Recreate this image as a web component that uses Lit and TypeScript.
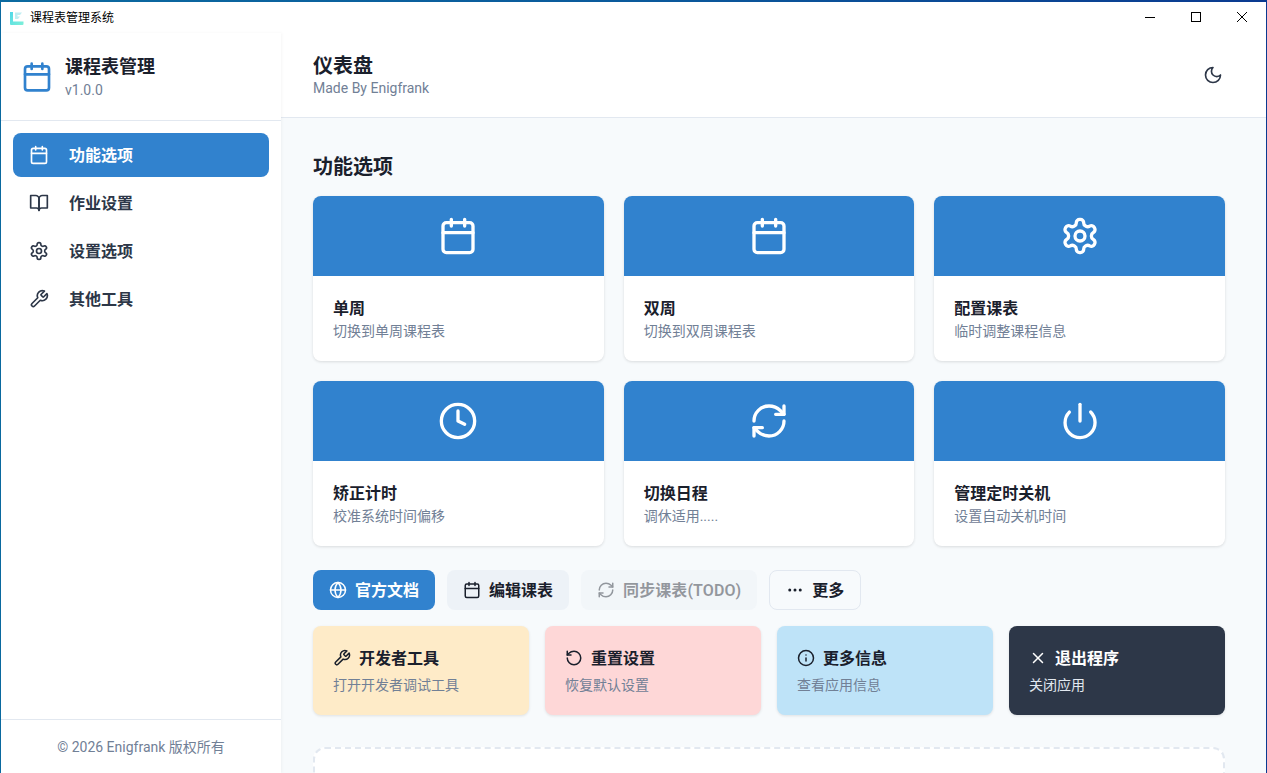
import { LitElement, html, css, svg } from "lit";
import { customElement } from "lit/decorators.js";

const ICONS: Record<string, unknown> = {
  calendar: svg`<rect x="3" y="4" width="18" height="18" rx="2"/><path d="M16 2v4M8 2v4M3 10h18"/>`,
  book: svg`<path d="M2 3h6a4 4 0 0 1 4 4v14a3 3 0 0 0-3-3H2z"/><path d="M22 3h-6a4 4 0 0 0-4 4v14a3 3 0 0 1 3-3h7z"/>`,
  gear: svg`<path d="M12.22 2h-.44a2 2 0 0 0-2 2v.18a2 2 0 0 1-1 1.73l-.43.25a2 2 0 0 1-2 0l-.15-.08a2 2 0 0 0-2.73.73l-.22.38a2 2 0 0 0 .73 2.73l.15.1a2 2 0 0 1 1 1.72v.51a2 2 0 0 1-1 1.74l-.15.09a2 2 0 0 0-.73 2.73l.22.38a2 2 0 0 0 2.73.73l.15-.08a2 2 0 0 1 2 0l.43.25a2 2 0 0 1 1 1.73V20a2 2 0 0 0 2 2h.44a2 2 0 0 0 2-2v-.18a2 2 0 0 1 1-1.73l.43-.25a2 2 0 0 1 2 0l.15.08a2 2 0 0 0 2.73-.73l.22-.39a2 2 0 0 0-.73-2.73l-.15-.08a2 2 0 0 1-1-1.74v-.5a2 2 0 0 1 1-1.74l.15-.09a2 2 0 0 0 .73-2.73l-.22-.38a2 2 0 0 0-2.73-.73l-.15.08a2 2 0 0 1-2 0l-.43-.25a2 2 0 0 1-1-1.73V4a2 2 0 0 0-2-2z"/><circle cx="12" cy="12" r="3"/>`,
  wrench: svg`<path d="M14.7 6.3a1 1 0 0 0 0 1.4l1.6 1.6a1 1 0 0 0 1.4 0l3.77-3.77a6 6 0 0 1-7.94 7.94l-6.91 6.91a2.12 2.12 0 0 1-3-3l6.91-6.91a6 6 0 0 1 7.94-7.94l-3.76 3.76z"/>`,
  moon: svg`<path d="M12 3a6 6 0 0 0 9 9 9 9 0 1 1-9-9Z"/>`,
  clock: svg`<circle cx="12" cy="12" r="10"/><path d="M12 6v6l4 2"/>`,
  refresh: svg`<path d="M3 12a9 9 0 0 1 9-9 9.75 9.75 0 0 1 6.74 2.74L21 8"/><path d="M21 3v5h-5"/><path d="M21 12a9 9 0 0 1-9 9 9.75 9.75 0 0 1-6.74-2.74L3 16"/><path d="M8 16H3v5"/>`,
  power: svg`<path d="M12 2v10"/><path d="M18.4 6.6a9 9 0 1 1-12.77.04"/>`,
  globe: svg`<circle cx="12" cy="12" r="10"/><path d="M12 2a14.5 14.5 0 0 0 0 20 14.5 14.5 0 0 0 0-20"/><path d="M2 12h20"/>`,
  more: svg`<circle cx="12" cy="12" r="1"/><circle cx="19" cy="12" r="1"/><circle cx="5" cy="12" r="1"/>`,
  undo: svg`<path d="M3 12a9 9 0 1 0 9-9 9.75 9.75 0 0 0-6.74 2.74L3 8"/><path d="M3 3v5h5"/>`,
  info: svg`<circle cx="12" cy="12" r="10"/><path d="M12 16v-4"/><path d="M12 8h.01"/>`,
  x: svg`<path d="M18 6 6 18"/><path d="m6 6 12 12"/>`,
};

const icon = (name: string, size: number) => html`<svg
  class="ic"
  width=${size}
  height=${size}
  viewBox="0 0 24 24"
  fill="none"
  stroke="currentColor"
  stroke-width="2"
  stroke-linecap="round"
  stroke-linejoin="round"
>${ICONS[name]}</svg>`;

const NAV = [
  ["calendar", "功能选项"],
  ["book", "作业设置"],
  ["gear", "设置选项"],
  ["wrench", "其他工具"],
];
const CARDS = [
  ["calendar", "单周", "切换到单周课程表"],
  ["calendar", "双周", "切换到双周课程表"],
  ["gear", "配置课表", "临时调整课程信息"],
  ["clock", "矫正计时", "校准系统时间偏移"],
  ["refresh", "切换日程", "调休适用....."],
  ["power", "管理定时关机", "设置自动关机时间"],
];
const BUTTONS = [
  ["globe", "官方文档", "primary"],
  ["calendar", "编辑课表", "secondary"],
  ["refresh", "同步课表(TODO)", "secondary disabled"],
  ["more", "更多", "outline"],
];
const TILES = [
  ["wrench", "开发者工具", "打开开发者调试工具", "amber"],
  ["undo", "重置设置", "恢复默认设置", "rose"],
  ["info", "更多信息", "查看应用信息", "sky"],
  ["x", "退出程序", "关闭应用", "dark"],
];

@customElement("app-root")
export class AppRoot extends LitElement {
  static styles = css`
    :host {
      display: block;
      width: 1267px;
      height: 773px;
      overflow: hidden;
      font-family: Roboto, "Noto Sans CJK SC", sans-serif;
      color: #1a202c;
    }
    * {
      box-sizing: border-box;
    }
    .ic {
      display: block;
      flex: none;
    }
    .win {
      height: 773px;
      padding: 2px 1px 0 1px;
      background: linear-gradient(90deg, #0b6aa0 0%, #0a5a9c 50%, #0a3a90 100%);
      display: flex;
      flex-direction: column;
    }
    .titlebar {
      height: 31px;
      flex: none;
      background: #fff;
      display: flex;
      align-items: center;
      padding-left: 9px;
      font-size: 12px;
      color: #000;
    }
    .logo {
      margin-right: 6px;
    }
    .tname {
      flex: 1;
      font-family: "Noto Sans CJK SC", sans-serif;
      position: relative;
      top: -1px;
    }
    .winbtns {
      display: flex;
      margin-right: 1px;
    }
    .winbtn {
      width: 46px;
      height: 31px;
      display: flex;
      align-items: center;
      justify-content: center;
      position: relative;
      top: -1px;
    }
    .body {
      flex: 1;
      display: flex;
      min-height: 0;
    }
    .side {
      width: 280px;
      flex: none;
      background: #fff;
      display: flex;
      flex-direction: column;
      box-shadow: 1px 0 3px rgba(0, 0, 0, 0.04);
      position: relative;
      z-index: 1;
    }
    .brand {
      height: 88px;
      flex: none;
      border-bottom: 1px solid #e2e8f0;
      display: flex;
      align-items: center;
      gap: 12px;
      padding: 0 20px;
      color: #3182ce;
    }
    .brand-t {
      font-size: 18px;
      font-weight: 700;
      line-height: 27px;
      color: #1a202c;
    }
    .brand-v {
      font-size: 14px;
      line-height: 20px;
      color: #718096;
    }
    .nav {
      flex: 1;
      padding: 12px;
      display: flex;
      flex-direction: column;
      gap: 4px;
    }
    .item {
      height: 44px;
      display: flex;
      align-items: center;
      gap: 20px;
      padding: 0 16px;
      border-radius: 8px;
      font-size: 16px;
      font-weight: 600;
      color: #2d3748;
    }
    .item span {
      padding-bottom: 2px;
    }
    .item.on {
      background: #3182ce;
      color: #fff;
    }
    .foot {
      height: 54px;
      flex: none;
      border-top: 1px solid #e2e8f0;
      display: flex;
      align-items: center;
      justify-content: center;
      font-size: 14px;
      color: #718096;
      padding-bottom: 2px;
    }
    .main {
      flex: 1;
      min-width: 0;
      background: #f7fafc;
      display: flex;
      flex-direction: column;
    }
    .head {
      height: 85px;
      flex: none;
      background: #fff;
      border-bottom: 1px solid #e2e8f0;
      display: flex;
      align-items: center;
      justify-content: space-between;
      padding: 0 43px 0 32px;
    }
    .head-text {
      padding-bottom: 4px;
    }
    .head h1 {
      margin: 0;
      font-size: 20px;
      line-height: 30px;
      font-weight: 700;
    }
    .head p {
      margin: 0;
      font-size: 14px;
      line-height: 14px;
      color: #718096;
    }
    .moon {
      color: #2d3748;
    }
    .content {
      flex: 1;
      min-height: 0;
      overflow: hidden;
      padding: 34px 41px 0 32px;
    }
    h2 {
      margin: 0 0 14px;
      font-size: 20px;
      line-height: 30px;
      font-weight: 700;
    }
    .cards {
      display: grid;
      grid-template-columns: repeat(3, 1fr);
      gap: 20px;
    }
    .card {
      background: #fff;
      border-radius: 8px;
      overflow: hidden;
      box-shadow: 0 1px 3px rgba(0, 0, 0, 0.12);
    }
    .card-top {
      height: 80px;
      background: #3182ce;
      color: #fff;
      display: flex;
      align-items: center;
      justify-content: center;
    }
    .card-body {
      padding: 21px 20px 0;
      height: 85px;
    }
    .t {
      font-size: 16px;
      line-height: 24px;
      font-weight: 600;
    }
    .s {
      font-size: 14px;
      line-height: 21px;
      color: #718096;
    }
    .btns {
      display: flex;
      gap: 12px;
      margin-top: 24px;
    }
    .btn {
      height: 40px;
      display: flex;
      align-items: center;
      gap: 8px;
      padding: 0 16px;
      border-radius: 8px;
      font-size: 16px;
      font-weight: 600;
      white-space: nowrap;
    }
    .btn span {
      padding-bottom: 2px;
    }
    .primary {
      background: #3182ce;
      color: #fff;
    }
    .secondary {
      background: #edf2f7;
      color: #1a202c;
    }
    .disabled {
      opacity: 0.45;
      letter-spacing: 0.1px;
    }
    .outline {
      border: 1px solid #e2e8f0;
      color: #1a202c;
    }
    .tiles {
      display: grid;
      grid-template-columns: repeat(4, 1fr);
      gap: 16px;
      margin-top: 16px;
    }
    .tile {
      padding: 21px 20px 0;
      height: 89px;
      border-radius: 8px;
      box-shadow: 0 1px 3px rgba(0, 0, 0, 0.1);
    }
    .tile-t {
      display: flex;
      align-items: center;
      gap: 8px;
      margin-bottom: 4px;
    }
    .tile-t .ic {
      position: relative;
      top: -1px;
    }
    .amber {
      background: #feebc8;
    }
    .rose {
      background: #fed7d7;
    }
    .sky {
      background: #bee3f8;
    }
    .dark {
      background: #2d3748;
      color: #fff;
    }
    .dark .s {
      color: #e2e8f0;
    }
    .dash {
      margin-top: 32px;
      height: 200px;
      background: #fff;
      border: 2px dashed #e2e8f0;
      border-radius: 12px;
    }
  `;

  render() {
    return html`<div class="win">
      <div class="titlebar">
        <svg class="logo" width="14" height="14" viewBox="0 0 14 14">
          <defs>
            <linearGradient id="lg" x1="0" y1="0" x2="1" y2="1">
              <stop offset="0" stop-color="#4fd8e8" />
              <stop offset="1" stop-color="#7ff0d8" />
            </linearGradient>
          </defs>
          <path d="M0 1h3v9.5h10.5V13a1 1 0 0 1-1 1H1a1 1 0 0 1-1-1z" fill="url(#lg)" />
          <path d="M5 1.5h7l-2 2.5H7.5v1.5H10L8 8H5z" fill="#bfeef2" />
        </svg>
        <span class="tname">课程表管理系统</span>
        <div class="winbtns">
          <div class="winbtn">
            <svg width="10" height="10" viewBox="0 0 10 10"><path d="M0 5.5h10" stroke="#000" /></svg>
          </div>
          <div class="winbtn">
            <svg width="10" height="10" viewBox="0 0 10 10"><rect x=".5" y=".5" width="9" height="9" fill="none" stroke="#000" /></svg>
          </div>
          <div class="winbtn">
            <svg width="10" height="10" viewBox="0 0 10 10"><path d="M0 0l10 10M10 0L0 10" stroke="#000" /></svg>
          </div>
        </div>
      </div>
      <div class="body">
        <aside class="side">
          <div class="brand">
            ${icon("calendar", 32)}
            <div>
              <div class="brand-t">课程表管理</div>
              <div class="brand-v">v1.0.0</div>
            </div>
          </div>
          <nav class="nav">
            ${NAV.map(
              ([i, t], n) => html`<div class="item ${n === 0 ? "on" : ""}">${icon(i, 20)}<span>${t}</span></div>`
            )}
          </nav>
          <div class="foot">© 2026 Enigfrank 版权所有</div>
        </aside>
        <main class="main">
          <header class="head">
            <div class="head-text">
              <h1>仪表盘</h1>
              <p>Made By Enigfrank</p>
            </div>
            <div class="moon">${icon("moon", 20)}</div>
          </header>
          <div class="content">
            <h2>功能选项</h2>
            <div class="cards">
              ${CARDS.map(
                ([i, t, s]) => html`<div class="card">
                  <div class="card-top">${icon(i, 40)}</div>
                  <div class="card-body">
                    <div class="t">${t}</div>
                    <div class="s">${s}</div>
                  </div>
                </div>`
              )}
            </div>
            <div class="btns">
              ${BUTTONS.map(
                ([i, t, c]) => html`<div class="btn ${c}">${icon(i, 18)}<span>${t}</span></div>`
              )}
            </div>
            <div class="tiles">
              ${TILES.map(
                ([i, t, s, c]) => html`<div class="tile ${c}">
                  <div class="t tile-t">${icon(i, 18)}<span>${t}</span></div>
                  <div class="s">${s}</div>
                </div>`
              )}
            </div>
            <div class="dash"></div>
          </div>
        </main>
      </div>
    </div>`;
  }
}
